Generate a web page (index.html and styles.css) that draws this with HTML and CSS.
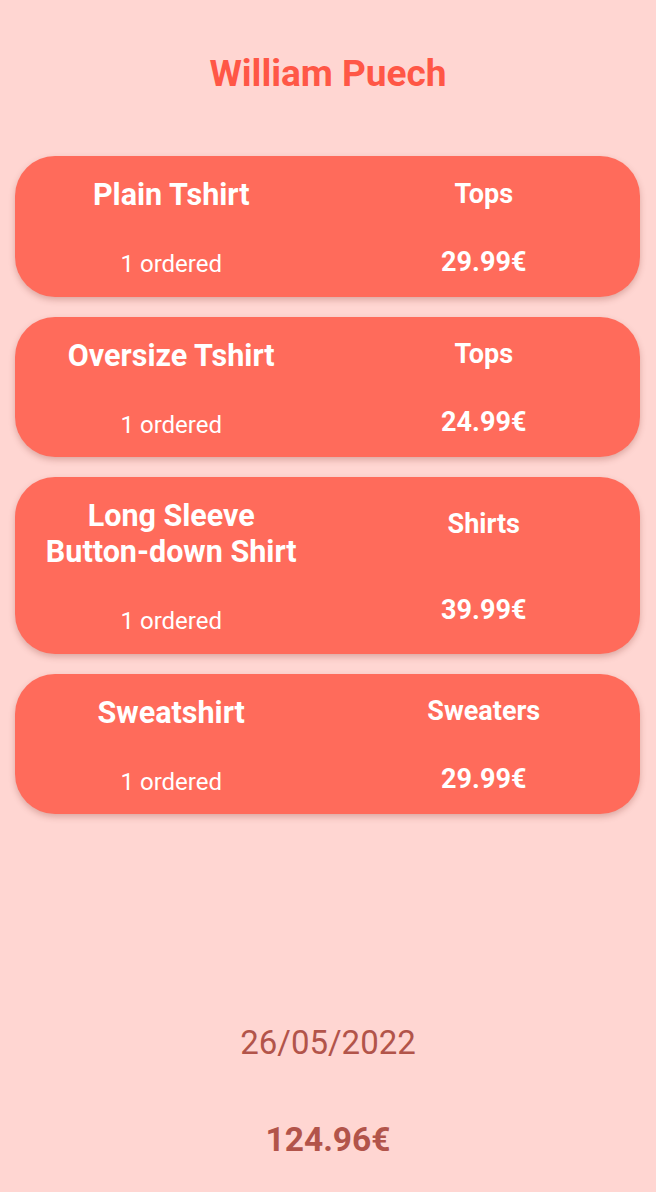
FILE: index.html
```html
<!DOCTYPE html>
<html lang="en">
<head>
<meta charset="utf-8">
<title>William Puech</title>
<link rel="stylesheet" href="styles.css">
</head>
<body>
<div class="page">
  <h1 class="title">William Puech</h1>
  <div class="list">
    <div class="card">
      <div class="col left">
        <div class="name">Plain Tshirt</div>
        <div class="qty">1 ordered</div>
      </div>
      <div class="col right">
        <div class="cat">Tops</div>
        <div class="price">29.99€</div>
      </div>
    </div>
    <div class="card">
      <div class="col left">
        <div class="name">Oversize Tshirt</div>
        <div class="qty">1 ordered</div>
      </div>
      <div class="col right">
        <div class="cat">Tops</div>
        <div class="price">24.99€</div>
      </div>
    </div>
    <div class="card">
      <div class="col left">
        <div class="name">Long Sleeve <span class="nowrap">Button-down</span> Shirt</div>
        <div class="qty">1 ordered</div>
      </div>
      <div class="col right">
        <div class="cat">Shirts</div>
        <div class="price">39.99€</div>
      </div>
    </div>
    <div class="card">
      <div class="col left">
        <div class="name">Sweatshirt</div>
        <div class="qty">1 ordered</div>
      </div>
      <div class="col right">
        <div class="cat">Sweaters</div>
        <div class="price">29.99€</div>
      </div>
    </div>
  </div>
  <div class="footer">
    <div class="date">26/05/2022</div>
    <div class="total">124.96€</div>
  </div>
</div>
</body>
</html>
```
FILE: styles.css
```css
html, body {
  margin: 0;
  padding: 0;
  background: #FFD6D2;
  font-family: Roboto, "Liberation Sans", sans-serif;
}

.page {
  min-height: 100vh;
  display: flex;
  flex-direction: column;
  align-items: stretch;
}

.title {
  margin: 0;
  padding-top: 52px;
  text-align: center;
  font-size: 37px;
  font-weight: 700;
  line-height: 43px;
  color: #FF5746;
}

.list {
  flex: 1;
  display: flex;
  flex-direction: column;
  gap: 20px;
  padding: 61px 16px 0 15px;
}

.card {
  display: grid;
  grid-template-columns: 1fr 1fr;
  background: #FF6B5B;
  border-radius: 40px;
  box-shadow: 0 3px 6px rgba(130, 50, 40, 0.28);
  color: #FFFFFF;
  text-align: center;
}

.col {
  display: flex;
  flex-direction: column;
  align-items: center;
}

.left {
  padding: 21px 12px 18.5px;
  gap: 38px;
}

.right {
  justify-content: space-around;
  padding-top: 4px;
}

.name {
  font-size: 30.5px;
  font-weight: 700;
  line-height: 36px;
}

.nowrap {
  white-space: nowrap;
}

.qty {
  font-size: 24px;
  font-weight: 400;
  line-height: 27px;
}

.cat, .price {
  font-size: 27px;
  font-weight: 700;
  line-height: 31px;
}

.footer {
  display: flex;
  flex-direction: column;
  align-items: center;
  gap: 57px;
  padding-bottom: 32px;
  color: #B2544A;
}

.date {
  font-size: 33px;
  font-weight: 400;
  line-height: 40px;
}

.total {
  font-size: 33.5px;
  font-weight: 700;
  line-height: 40px;
}
```
